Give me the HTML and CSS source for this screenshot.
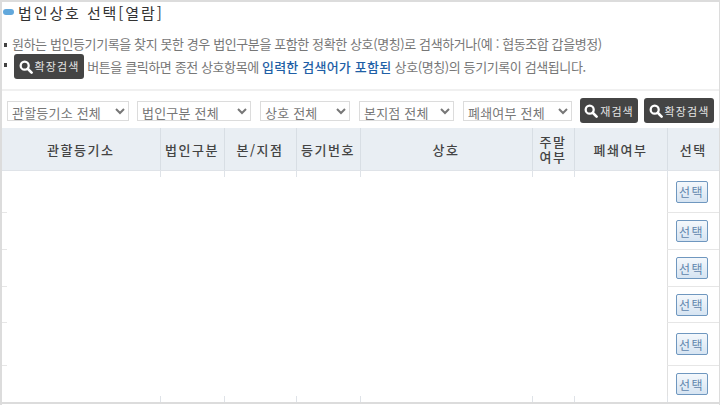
FILE: index.html
```html
<!DOCTYPE html>
<html lang="ko">
<head>
  <meta charset="UTF-8">
  <title>법인상호 선택[열람]</title>
  <link rel="stylesheet" href="styles.css">
</head>
<body>
  <svg width="0" height="0" class="defs">
    <symbol id="search" viewBox="0 0 16 16">
      <circle cx="6.5" cy="6.5" r="4.6" fill="none" stroke="#fff" stroke-width="2.6"/>
      <path d="M10 10l4.4 4.4" stroke="#fff" stroke-width="3" stroke-linecap="round"/>
    </symbol>
  </svg>

  <div class="page">
    <h2 class="title"><span class="title-mark"></span>법인상호 선택[열람]</h2>

    <ul class="notes">
      <li>원하는 법인등기기록을 찾지 못한 경우 법인구분을 포함한 정확한 상호(명칭)로 검색하거나(예 : 협동조합 갑을병정)</li>
      <li><span class="btn-dark btn-note"><svg class="ico"><use href="#search"/></svg>확장검색</span> 버튼을 클릭하면 종전 상호항목에 <b class="em">입력한 검색어가 포함된</b> 상호(명칭)의 등기기록이 검색됩니다.</li>
    </ul>

    <div class="panel">
      <div class="filters">
        <select class="w1"><option>관할등기소 전체</option></select>
        <select class="w2"><option>법인구분 전체</option></select>
        <select class="w3"><option>상호 전체</option></select>
        <select class="w4"><option>본지점 전체</option></select>
        <select class="w5"><option>폐쇄여부 전체</option></select>
        <button class="btn-dark btn-re"><svg class="ico"><use href="#search"/></svg>재검색</button>
        <button class="btn-dark btn-ext"><svg class="ico"><use href="#search"/></svg>확장검색</button>
      </div>

      <table>
        <colgroup>
          <col class="c1"><col class="c2"><col class="c3"><col class="c4">
          <col class="c5"><col class="c6"><col class="c7"><col class="c8">
        </colgroup>
        <tr>
          <th>관할등기소</th><th>법인구분</th><th>본/지점</th><th>등기번호</th>
          <th>상호</th><th>주말<br>여부</th><th>폐쇄여부</th><th>선택</th>
        </tr>
        <tr class="r1"><td colspan="7"></td><td><button class="pick">선택</button></td></tr>
        <tr class="r2"><td colspan="7"></td><td><button class="pick">선택</button></td></tr>
        <tr class="r3"><td colspan="7"></td><td><button class="pick">선택</button></td></tr>
        <tr class="r4"><td colspan="7"></td><td><button class="pick">선택</button></td></tr>
        <tr class="r5"><td colspan="7"></td><td><button class="pick">선택</button></td></tr>
        <tr class="r6">
          <td class="stub"></td><td class="stub"></td><td class="stub"></td><td class="stub"></td>
          <td class="stub"></td><td class="stub"></td><td class="stub"></td>
          <td><button class="pick">선택</button></td>
        </tr>
      </table>
    </div>
  </div>
</body>
</html>
```

FILE: styles.css
```css
html, body {
  margin: 0;
  padding: 0;
  height: 405px;
  overflow: hidden;
}
body {
  font-family: "Noto Sans CJK KR", "Liberation Sans", sans-serif;
  background: #fff;
  color: #555;
}
.defs {
  position: absolute;
}
.page {
  box-sizing: border-box;
  height: 405px;
  border: 2px solid #dcdcdc;
  border-bottom: 0;
  border-right-width: 1px;
  overflow: hidden;
}
.title {
  display: flex;
  align-items: center;
  margin: 0;
  padding: 0 0 0 1px;
  height: 20px;
  font-size: 15px;
  font-weight: 400;
  letter-spacing: 1.9px;
  color: #333;
}
.title-mark {
  width: 11px;
  height: 6px;
  margin-right: 4px;
  border-radius: 3px;
  background: #62a8dc;
}
.notes {
  list-style: none;
  margin: 12px 0 0;
  padding: 0 0 0 10px;
  font-size: 13px;
  letter-spacing: -0.4px;
  color: #777;
}
.notes li {
  position: relative;
  height: 20px;
  line-height: 20px;
  white-space: nowrap;
}
.notes li + li {
  height: 25px;
  line-height: 25px;
}
.notes li::before {
  content: "";
  position: absolute;
  left: -8px;
  top: 9px;
  width: 3px;
  height: 4px;
  background: #444;
}
.em {
  font-weight: 500;
  letter-spacing: 0.2px;
  color: #1f5fa6;
}
.btn-dark {
  display: inline-flex;
  align-items: center;
  justify-content: center;
  border: 0;
  padding: 0;
  border-radius: 3px;
  background: #444;
  color: #e4e4e4;
  font-family: inherit;
  font-size: 11px;
  letter-spacing: 1.1px;
}
.ico {
  width: 14px;
  height: 14px;
  margin-right: 2px;
}
.btn-note {
  width: 70px;
  height: 25px;
  margin: 0 0 0 2px;
  vertical-align: top;
}
.panel {
  margin-top: 10px;
  border-top: 2px solid #f0f0f0;
}
.filters {
  display: flex;
  align-items: center;
  height: 35px;
  padding: 2px 0 0 5px;
}
select {
  box-sizing: border-box;
  height: 20px;
  padding: 0;
  border: 1px solid #dcdcdc;
  background: #fff;
  color: #777;
  font-family: inherit;
  font-size: 13px;
  letter-spacing: 0.2px;
}
.w1 { width: 122px; margin-right: 8px; }
.w2 { width: 114px; margin-right: 9px; }
.w3 { width: 90px; margin-right: 9px; }
.w4 { width: 95px; margin-right: 9px; }
.w5 { width: 109px; margin-right: 8px; }
.btn-re { width: 58px; height: 25px; margin-right: 6px; }
.btn-ext { width: 70px; height: 25px; }
table {
  width: 717px;
  table-layout: fixed;
  border-collapse: collapse;
  border-bottom: 2px solid #dcdcdc;
}
.c1 { width: 158px; }
.c2 { width: 64px; }
.c3 { width: 72px; }
.c4 { width: 64px; }
.c5 { width: 172px; }
.c6 { width: 42px; }
.c7 { width: 93px; }
th {
  position: relative;
  height: 42px;
  padding: 0;
  background: #e9eef3;
  border-right: 1px solid #d8dee4;
  border-bottom: 1px solid #dfe3e8;
  font-size: 13px;
  font-weight: 500;
  letter-spacing: 1.5px;
  line-height: 15px;
  color: #444;
}
th:last-child {
  border-right: 0;
}
/* grid lines only peek out at the edges of the empty body */
th:not(:last-child)::after,
.stub::after {
  content: "";
  position: absolute;
  right: -1px;
  width: 1px;
  height: 6px;
  background: #dfe3e8;
}
th:not(:last-child)::after {
  bottom: -7px;
}
.stub::after {
  bottom: 0;
}
td {
  position: relative;
  padding: 0;
  text-align: center;
}
td:last-child {
  border-left: 1px solid #e0e0e0;
  border-bottom: 1px solid #e6e6e6;
}
td:first-child::before {
  content: "";
  position: absolute;
  left: 0;
  bottom: 0;
  width: 5px;
  height: 1px;
  background: #e6e6e6;
}
.r6 td:first-child::before {
  display: none;
}
.r6 td:last-child {
  border-bottom: 0;
}
.r1 td { height: 41px; }
.r2 td { height: 36px; }
.r3 td { height: 36px; }
.r4 td { height: 35px; }
.r5 td { height: 42px; }
.r6 td { height: 36px; }
.pick {
  display: block;
  box-sizing: border-box;
  width: 32px;
  height: 22px;
  margin: 0 0 0 8px;
  padding: 0;
  border: 1px solid #6f97bf;
  border-radius: 2px;
  background: linear-gradient(#f4f8fc, #d6e4f2);
  color: #5f86ad;
  font-family: inherit;
  font-size: 12px;
  letter-spacing: 1.5px;
}
```
